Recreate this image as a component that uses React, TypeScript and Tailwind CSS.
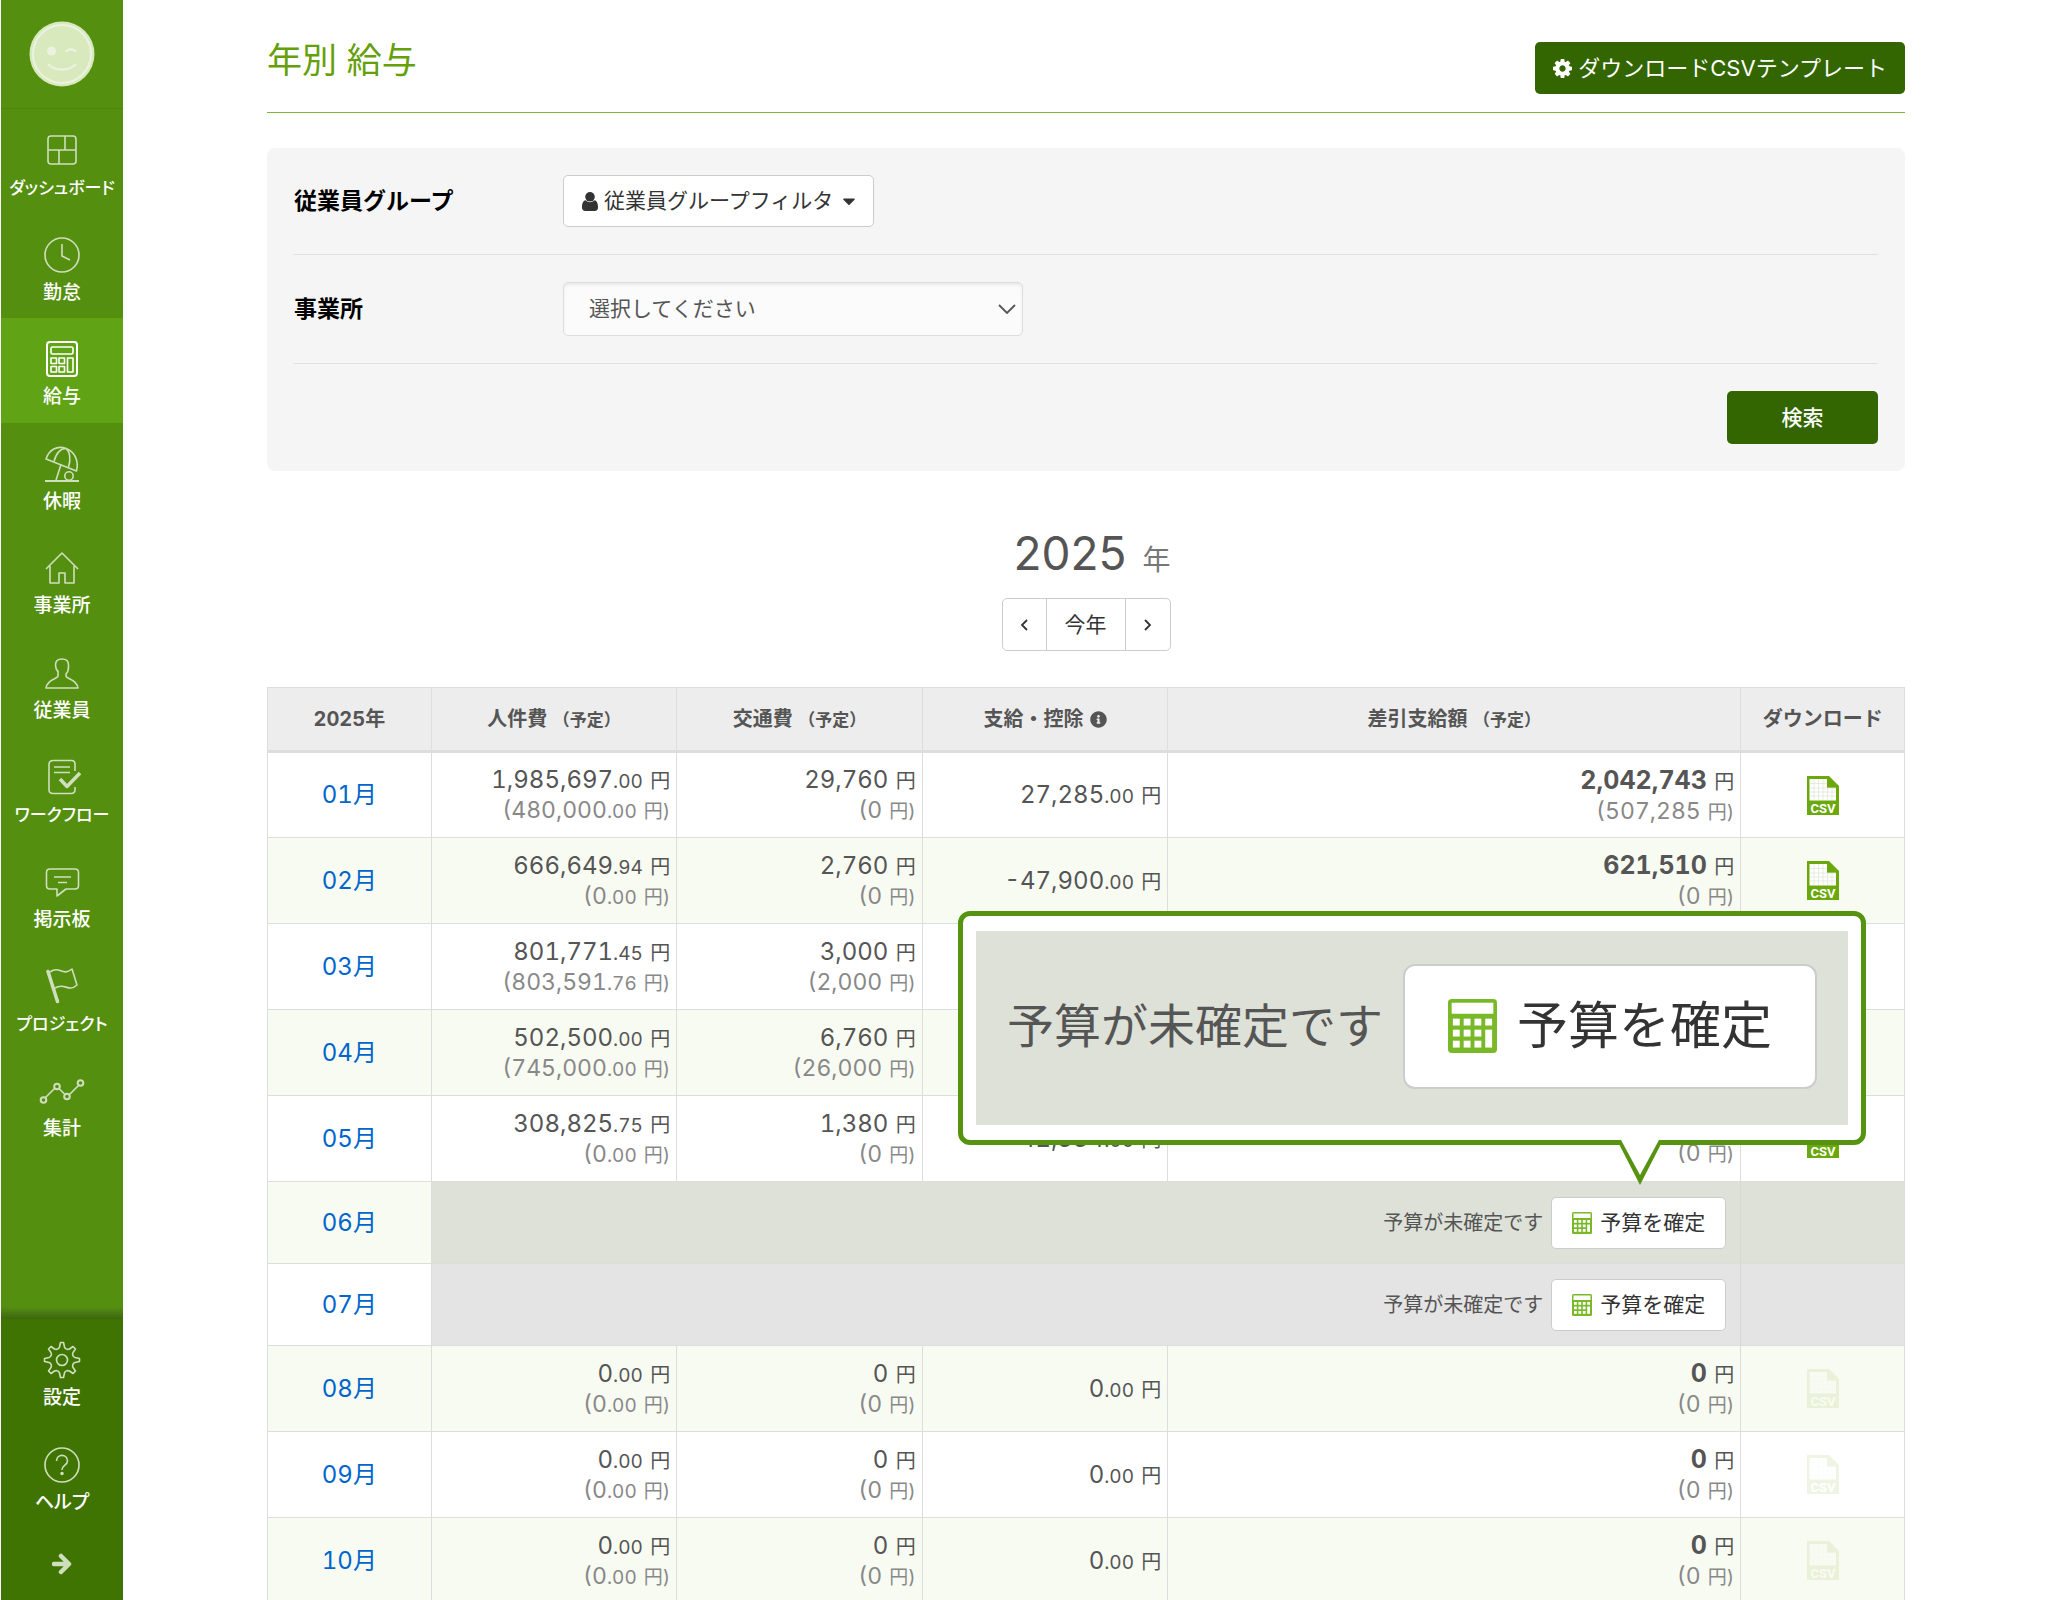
import type { ReactNode } from 'react'
import { FaCaretDown, FaInfoCircle } from 'react-icons/fa'

interface Amount {
  value: string
  decimals?: string
  planned?: string
  plannedDecimals?: string
}

interface MonthRow {
  month: string
  confirmed: boolean
  hasCsv?: boolean
  labor?: Amount
  transport?: Amount
  adjustment?: Amount
  net?: Amount
}

const emptyMonth = {
  confirmed: true,
  hasCsv: false,
  labor: { value: '0', decimals: '.00', planned: '0', plannedDecimals: '.00' },
  transport: { value: '0', planned: '0' },
  adjustment: { value: '0', decimals: '.00' },
  net: { value: '0', planned: '0' },
}

const rows: MonthRow[] = [
  {
    month: '01月',
    confirmed: true,
    hasCsv: true,
    labor: { value: '1,985,697', decimals: '.00', planned: '480,000', plannedDecimals: '.00' },
    transport: { value: '29,760', planned: '0' },
    adjustment: { value: '27,285', decimals: '.00' },
    net: { value: '2,042,743', planned: '507,285' },
  },
  {
    month: '02月',
    confirmed: true,
    hasCsv: true,
    labor: { value: '666,649', decimals: '.94', planned: '0', plannedDecimals: '.00' },
    transport: { value: '2,760', planned: '0' },
    adjustment: { value: '-47,900', decimals: '.00' },
    net: { value: '621,510', planned: '0' },
  },
  {
    month: '03月',
    confirmed: true,
    labor: { value: '801,771', decimals: '.45', planned: '803,591', plannedDecimals: '.76' },
    transport: { value: '3,000', planned: '2,000' },
  },
  {
    month: '04月',
    confirmed: true,
    labor: { value: '502,500', decimals: '.00', planned: '745,000', plannedDecimals: '.00' },
    transport: { value: '6,760', planned: '26,000' },
  },
  {
    month: '05月',
    confirmed: true,
    hasCsv: true,
    labor: { value: '308,825', decimals: '.75', planned: '0', plannedDecimals: '.00' },
    transport: { value: '1,380', planned: '0' },
    adjustment: { value: '-42,334', decimals: '.00' },
    net: { value: '', planned: '0' },
  },
  { month: '06月', confirmed: false },
  { month: '07月', confirmed: false },
  { month: '08月', ...emptyMonth },
  { month: '09月', ...emptyMonth },
  { month: '10月', ...emptyMonth },
]

function LineIcon({ children }: { children: ReactNode }) {
  return (
    <svg
      viewBox="0 0 48 40"
      className="w-12 h-10 text-[#cfdfbd]"
      fill="none"
      stroke="currentColor"
      strokeWidth="1.6"
      strokeLinejoin="round"
      aria-hidden="true"
    >
      {children}
    </svg>
  )
}

interface NavItem {
  label: string
  icon: ReactNode
  active?: boolean
  long?: boolean
}

const navItems: NavItem[] = [
  {
    label: 'ダッシュボード',
    long: true,
    icon: (
      <>
        <rect x="10" y="6" width="28" height="28" rx="3" />
        <path d="M10 20h28M27 6v14M21 20v14" />
      </>
    ),
  },
  {
    label: '勤怠',
    icon: (
      <>
        <circle cx="24" cy="20" r="17" />
        <path d="M24 9v12l8 4" />
      </>
    ),
  },
  {
    label: '給与',
    active: true,
    icon: (
      <g className="text-white" stroke="currentColor">
        <rect x="9" y="3" width="30" height="34" rx="3" strokeWidth="2" />
        <rect x="13" y="8" width="22" height="7" rx="1.5" />
        <rect x="13" y="19" width="5.5" height="5.5" />
        <rect x="21" y="19" width="5.5" height="5.5" />
        <rect x="13" y="27.5" width="5.5" height="5.5" />
        <rect x="21" y="27.5" width="5.5" height="5.5" />
        <rect x="29.5" y="19" width="5.5" height="14" />
      </g>
    ),
  },
  {
    label: '休暇',
    icon: (
      <>
        <path d="M8 15C11 6 19 1 28 4.5c9 3 13 13 10.5 22.5z" />
        <path d="M16 17.5C18 9 23 4 28 4.5c4 3 5 11 2.5 18.5M23 20.5L18 36" />
        <circle cx="31" cy="32" r="4.2" />
        <path d="M7 37h34" strokeWidth="2" />
      </>
    ),
  },
  {
    label: '事業所',
    icon: <path d="M8 21L24 5l16 16M12 18v17h9V25h6v10h9V18" />,
  },
  {
    label: '従業員',
    icon: (
      <path d="M20 18v5c0 3-11 3-12 12h32c-1-9-12-9-12-12v-2c3-3 2.5-5 2.5-9 0-4-2.5-6-6.5-6s-6.5 2-6.5 6c0 3 0 4 2.5 7z" />
    ),
  },
  {
    label: 'ワークフロー',
    long: true,
    icon: (
      <>
        <path d="M37 14V7c0-2-1-3.5-3.5-3.5h-18C13 3.5 11 5 11 7.5v25c0 2.5 1.5 4 4 4h18c2.5 0 4-1.5 4-4V30M16 10h16M16 15.5h16" />
        <path d="M22 22l7 7.5L42 16" strokeWidth="3.5" />
      </>
    ),
  },
  {
    label: '掲示板',
    icon: (
      <>
        <path d="M12 7h25c2 0 3.5 1.5 3.5 3.5v13c0 2-1.5 3.5-3.5 3.5h-9l-9 7v-7h-7c-2 0-3.5-1.5-3.5-3.5v-13C8.5 8.5 10 7 12 7z" />
        <path d="M16 15h17M20 20.5h9" />
      </>
    ),
  },
  {
    label: 'プロジェクト',
    long: true,
    icon: (
      <>
        <path d="M10 5.5l9.5 30" strokeWidth="3.5" strokeLinecap="round" />
        <path d="M12 6c10-7 12 5 22-3l5 16c-9 8-12-3-22 3" />
      </>
    ),
  },
  {
    label: '集計',
    icon: (
      <>
        <path d="M7.5 26.5l9-9M21 17.5l6 6M31.500 23.500l9-9" />
        <circle cx="5.5" cy="29" r="2.8" strokeWidth="2" />
        <circle cx="19" cy="15.5" r="2.8" strokeWidth="2" />
        <circle cx="29" cy="25.5" r="2.8" strokeWidth="2" />
        <circle cx="42.5" cy="12" r="2.8" strokeWidth="2" />
      </>
    ),
  },
]

function NavLink({ label, icon, active, long }: NavItem) {
  return (
    <a
      href="#"
      className={`flex flex-1 flex-col items-center pt-[21px] leading-7 font-medium text-white whitespace-nowrap ${
        long ? 'text-[17px]' : 'text-[19px]'
      } ${active ? 'bg-[#60a315]' : ''}`}
    >
      <LineIcon>{icon}</LineIcon>
      <span className="mt-1 [font-feature-settings:'palt']">{label}</span>
    </a>
  )
}

function Sidebar() {
  return (
    <aside className="flex w-[123px] shrink-0 flex-col border-l border-white bg-[#548f10]">
      <div className="flex h-[109px] items-center justify-center border-b border-[#4c840d]">
        <svg viewBox="0 0 66 66" className="size-[66px]" fill="none" aria-hidden="true">
          <circle cx="33" cy="33" r="32.5" fill="#d7e9bd" />
          <circle cx="33" cy="33" r="29" stroke="#ebf3e0" strokeWidth="2" />
          <circle cx="22.5" cy="30" r="4.5" fill="#ebf3e0" />
          <path d="M37 31c2-3.5 8-3.5 10 0M19 43c7 7.5 21 7.5 28 0" stroke="#ebf3e0" strokeWidth="2.2" />
        </svg>
      </div>
      <nav className="flex h-[1045px] flex-col">
        {navItems.map((item) => (
          <NavLink key={item.label} {...item} />
        ))}
      </nav>
      <div className="mt-auto h-3 bg-linear-to-b from-[#548f10] to-[#3d6610]" />
      <div className="flex h-[281px] flex-col bg-[#407402]">
        <div className="flex h-[209px] flex-col">
          <NavLink
            label="設定"
            icon={
              <>
                <path d="M21.5 7l1-4.5h3l1 4.5c.5 2 3 3 5 2l3.5-2.5 2.5 2.5-2.5 3.5c-1 2 0 4.5 2 5l4.5 1v3l-4.5 1c-2 .5-3 3-2 5l2.5 3.5-2.5 2.5-3.5-2.5c-2-1-4.5 0-5 2l-1 4.5h-3l-1-4.5c-.5-2-3-3-5-2L13 33.5 10.5 31l2.5-3.5c1-2 0-4.5-2-5l-4.5-1v-3l4.5-1c2-.5 3-3 2-5L10.5 9 13 6.5 16.5 9c2 1 4.5 0 5-2z" />
                <circle cx="24" cy="20" r="5.5" />
              </>
            }
          />
          <NavLink
            label="ヘルプ"
            icon={
              <>
                <circle cx="24" cy="20" r="17" />
                <path d="M18.5 16c0-7.5 11-7.5 11 0 0 4.5-5.5 4-5.5 9" />
                <circle cx="24" cy="28.5" r="1" fill="currentColor" />
              </>
            }
          />
        </div>
        <button type="button" aria-label="メニューを開く" className="flex h-[72px] items-center justify-center">
          <svg viewBox="0 0 20 22" className="h-[22px] w-5 text-[#cfdfbd]" fill="none" aria-hidden="true">
            <path d="M2 11h14M9 3l8 8-8 8" stroke="currentColor" strokeWidth="4.5" strokeLinecap="round" strokeLinejoin="round" />
          </svg>
        </button>
      </div>
    </aside>
  )
}

function CogIcon() {
  return (
    <svg viewBox="0 128 1536 1536" className="size-[19px]" fill="currentColor" aria-hidden="true">
      <path d="M1024 896q0-106-75-181t-181-75-181 75-75 181 75 181 181 75 181-75 75-181zm512-109v222q0 12-8 23t-20 13l-185 28q-19 54-39 91 35 50 107 138 10 12 10 25t-9 23q-27 37-99 108t-94 71q-12 0-26-9l-138-108q-44 23-91 38-16 136-29 186-7 28-36 28h-222q-14 0-24.5-8.5t-11.5-21.5l-28-184q-49-16-90-37l-141 107q-10 9-25 9-14 0-25-11-126-114-165-168-7-10-7-23 0-12 8-23 15-21 51-66.5t54-70.5q-27-50-41-99l-183-27q-13-2-21-12.5t-8-23.5v-222q0-12 8-23t19-13l186-28q14-46 39-92-40-57-107-138-10-12-10-24 0-10 9-23 26-36 98.5-107.5t94.5-71.5q13 0 26 10l138 107q44-23 91-38 16-136 29-186 7-28 36-28h222q14 0 24.5 8.5t11.5 21.5l28 184q49 16 90 37l142-107q9-9 24-9 13 0 25 10 129 119 165 170 7 8 7 22 0 12-8 23-15 21-51 66.5t-54 70.5q26 50 41 98l183 28q13 2 21 12.5t8 23.5z" />
    </svg>
  )
}

function UserIcon() {
  return (
    <svg viewBox="0 0 16 19" className="h-[19px] w-4" fill="currentColor" aria-hidden="true">
      <circle cx="8" cy="4.8" r="4.8" />
      <path d="M3.5 8.2C1 8.5 0 11.5 0 15.5 0 17.8 1.3 19 3.2 19h9.6c1.9 0 3.2-1.2 3.2-3.5 0-4-1-7-3.5-7.3-2.7 2.6-6.3 2.6-9 0z" />
    </svg>
  )
}

function CalculatorIcon({ className }: { className: string }) {
  return (
    <svg viewBox="0 0 20 22" className={className} aria-hidden="true">
      <rect width="20" height="22" rx="1.5" fill="#79b928" />
      <g fill="#fff">
        <rect x="1.5" y="1.5" width="17" height="4.5" />
        <rect x="2" y="8" width="2.8" height="2.8" />
        <rect x="6.4" y="8" width="2.8" height="2.8" />
        <rect x="10.8" y="8" width="2.8" height="2.8" />
        <rect x="15.2" y="8" width="2.8" height="2.8" />
        <rect x="2" y="12.5" width="2.8" height="2.8" />
        <rect x="6.4" y="12.5" width="2.8" height="2.8" />
        <rect x="10.8" y="12.5" width="2.8" height="2.8" />
        <rect x="2" y="17" width="2.8" height="2.8" />
        <rect x="6.4" y="17" width="2.8" height="2.8" />
        <rect x="10.8" y="17" width="2.8" height="2.8" />
        <rect x="15.2" y="12.5" width="2.8" height="7.3" />
      </g>
    </svg>
  )
}

function CsvIcon({ faded }: { faded: boolean }) {
  return (
    <svg viewBox="0 0 32 39" className={`mx-auto h-[39px] w-8 ${faded ? 'opacity-10' : ''}`} aria-hidden="true">
      <path d="M0 0h22l10 10v29H0z" fill="#6aa80b" />
      <path d="M2.5 3H20v9h9v12.5H2.5z" fill="#fff" />
      <path d="M7 3v21M11.5 3v21M16 3v21M20.5 12v12M25 12v12M3 7.5h17M3 12h26M3 16h26M3 20h26" stroke="#dfe8d6" strokeWidth="0.8" />
      <text x="16" y="36.5" textAnchor="middle" fill="#fff" fontSize="13" fontWeight="700" fontFamily="Roboto, sans-serif">
        CSV
      </text>
    </svg>
  )
}

function AmountCell({ amount, bold }: { amount?: Amount; bold?: boolean }) {
  return (
    <td className="border-r border-[#ddd] pt-0.5 pr-1.5 text-right leading-7">
      {amount && (
        <>
          <div className="min-h-7">
            {amount.value && (
              <>
                <span className={bold ? 'text-[25px] font-bold' : ''}>{amount.value}</span>
                <span className="text-[19px]">{amount.decimals}</span>
                <span className="ml-0.5 text-[20px]"> 円</span>
              </>
            )}
          </div>
          {amount.planned && (
            <div className="text-[23px] leading-7 text-[#888]">
              ({amount.planned}
              <span className="text-[19px]">{amount.plannedDecimals}</span>
              <span className="ml-0.5 text-[19px]"> 円)</span>
            </div>
          )}
        </>
      )}
    </td>
  )
}

function ConfirmButton() {
  return (
    <button
      type="button"
      className="flex h-[52px] items-center gap-2 rounded-[5px] border border-[#ccc] bg-white px-5 text-[21px] text-[#333]"
    >
      <CalculatorIcon className="h-[22px] w-5" />
      予算を確定
    </button>
  )
}

function PayrollTable() {
  return (
    <table className="w-full table-fixed border-collapse border border-[#ddd] text-[24px] text-[#555] tabular-nums">
      <colgroup>
        <col className="w-[10%]" />
        <col className="w-[15%]" />
        <col className="w-[15%]" />
        <col className="w-[15%]" />
        <col className="w-[35%]" />
        <col className="w-[10%]" />
      </colgroup>
      <thead>
        <tr className="h-16 border-b-3 border-[#ddd] bg-[#ededed] text-[20px] [&>th]:border-r [&>th]:border-[#ddd]">
          <th>2025年</th>
          <th>
            人件費 <span className="text-[17px]">（予定）</span>
          </th>
          <th>
            交通費 <span className="text-[17px]">（予定）</span>
          </th>
          <th>
            <span className="inline-flex items-center gap-1.5">
              支給・控除 <FaInfoCircle className="size-[17px]" />
            </span>
          </th>
          <th>
            差引支給額 <span className="text-[17px]">（予定）</span>
          </th>
          <th>ダウンロード</th>
        </tr>
      </thead>
      <tbody>
        {rows.map((row, idx) => {
          const even = idx % 2 === 1
          const pending = even ? 'bg-[#dde1d7]' : 'bg-[#e4e4e4]'
          return (
            <tr
              key={row.month}
              className={`border-b border-[#ddd] ${row.confirmed ? 'h-[86px]' : 'h-[82px]'} ${even ? 'bg-[#f8fbf2]' : 'bg-white'}`}
            >
              <td className="border-r border-[#ddd] text-center">
                <a href="#" className="text-[#0066cc]">
                  {row.month}
                </a>
              </td>
              {row.confirmed ? (
                <>
                  <AmountCell amount={row.labor} />
                  <AmountCell amount={row.transport} />
                  <AmountCell amount={row.adjustment} />
                  <AmountCell amount={row.net} bold />
                  <td>{row.hasCsv !== undefined && <CsvIcon faded={!row.hasCsv} />}</td>
                </>
              ) : (
                <>
                  <td colSpan={4} className={`border-r border-[#d8d8d8] pr-[14px] ${pending}`}>
                    <div className="flex items-center justify-end gap-2">
                      <span className="text-[20px]">予算が未確定です</span>
                      <ConfirmButton />
                    </div>
                  </td>
                  <td className={pending} />
                </>
              )}
            </tr>
          )
        })}
      </tbody>
    </table>
  )
}

// Enlarged view of the confirm button, pointing at the June row
function Callout() {
  return (
    <div className="absolute top-[224px] right-[39px] rounded-xl border-5 border-[#569310] bg-white px-[13px] py-[15px]">
      <div className="flex h-[194px] items-center gap-5 bg-[#dde1d7] px-[31px] pb-1">
        <span className="text-[47px] whitespace-nowrap text-[#555]">予算が未確定です</span>
        <button
          type="button"
          className="flex h-[125px] items-center gap-5 rounded-xl border-2 border-[#ccc] bg-white px-[43px] text-[51px] whitespace-nowrap text-[#333]"
        >
          <CalculatorIcon className="h-[54px] w-[49px]" />
          予算を確定
        </button>
      </div>
      <svg viewBox="0 0 46 46" className="absolute top-full right-[198px] size-[46px]" aria-hidden="true">
        <path d="M0 0h46v5h-2.5L23 45 2.5 5H0z" fill="#569310" />
        <path d="M4 0h38L23 35z" fill="#fff" />
      </svg>
    </div>
  )
}

export default function App() {
  return (
    <div className="flex h-screen overflow-hidden bg-white font-[Inter,'Noto_Sans_CJK_JP',sans-serif] text-[#555]">
      <Sidebar />
      <main className="min-w-0 flex-1 pr-[143px] pl-36">
        <header className="flex h-[113px] items-start justify-between border-b border-[#82b435] pt-[42px]">
          <h1 className="text-[35px] leading-9 text-[#659f0a]">年別 給与</h1>
          <button
            type="button"
            className="flex h-[52px] items-center gap-1.5 rounded-[5px] bg-[#336600] px-[18px] text-[22px] text-white"
          >
            <CogIcon />
            ダウンロードCSVテンプレート
          </button>
        </header>

        <form className="mt-[35px] rounded-lg bg-[#f5f5f5] px-[27px]">
          <div className="flex items-center border-b border-[#e0e0e0] py-[27px]">
            <div id="group-label" className="w-[269px] text-[23px] font-bold text-black">
              従業員グループ
            </div>
            <button
              type="button"
              aria-labelledby="group-label"
              className="flex h-[52px] items-center gap-1.5 rounded-[5px] border border-[#ccc] bg-white pr-[14px] pl-[18px] text-[21px] text-[#333]"
            >
              <UserIcon />
              従業員グループフィルタ
              <FaCaretDown className="size-5" />
            </button>
          </div>
          <div className="flex items-center border-b border-[#e0e0e0] py-[27px]">
            <label htmlFor="office" className="w-[269px] text-[23px] font-bold text-black">
              事業所
            </label>
            <div className="relative w-[460px]">
              <select
                id="office"
                className="h-[54px] w-full appearance-none rounded-[5px] border border-[#ddd] bg-[#fbfbfb] pl-[25px] text-[21px] text-[#555] shadow-[inset_0_2px_3px_rgba(0,0,0,0.08)]"
              >
                <option>選択してください</option>
              </select>
              <svg viewBox="0 0 18 10" className="pointer-events-none absolute top-[22px] right-[7px] h-[10px] w-[18px]" fill="none" aria-hidden="true">
                <path d="M1 1l8 8 8-8" stroke="#555" strokeWidth="1.8" />
              </svg>
            </div>
          </div>
          <div className="flex justify-end py-[27px]">
            <button type="submit" className="h-[53px] w-[151px] rounded-[5px] bg-[#336600] text-[21px] font-medium text-white">
              検索
            </button>
          </div>
        </form>

        <section className="mt-[52px] flex flex-col items-center">
          <h2 className="flex items-baseline gap-4 pl-3 text-[46px] leading-[60px]">
            2025 <small className="text-[28px] text-[#777]">年</small>
          </h2>
          <div className="mt-2 flex h-[53px] divide-x divide-[#ccc] rounded-[5px] border border-[#ccc] text-[21px] text-[#333]">
            <button type="button" aria-label="前年" className="flex w-[44px] items-center justify-center">
              <svg viewBox="0 0 8 12" className="h-3 w-2" fill="none" aria-hidden="true">
                <path d="M7 1L2 6l5 5" stroke="currentColor" strokeWidth="1.8" />
              </svg>
            </button>
            <button type="button" className="w-[79px]">
              今年
            </button>
            <button type="button" aria-label="翌年" className="flex w-[44px] items-center justify-center">
              <svg viewBox="0 0 8 12" className="h-3 w-2" fill="none" aria-hidden="true">
                <path d="M1 1l5 5-5 5" stroke="currentColor" strokeWidth="1.8" />
              </svg>
            </button>
          </div>
        </section>

        <div className="relative mt-9">
          <PayrollTable />
          <Callout />
        </div>
      </main>
    </div>
  )
}
